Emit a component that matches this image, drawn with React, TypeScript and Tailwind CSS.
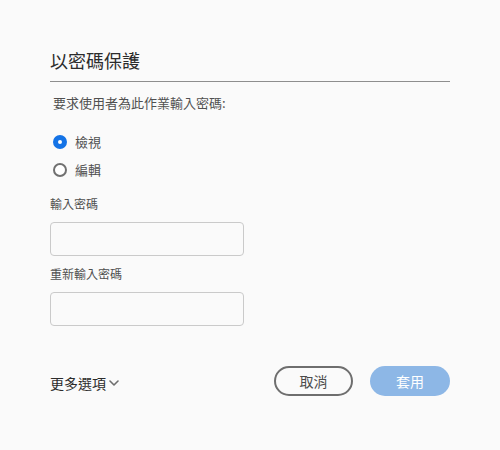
import React from 'react';

const font = { fontFamily: '"Noto Sans CJK TC", "Noto Sans", sans-serif' };

const Radio: React.FC<{ checked?: boolean; label: string }> = ({ checked, label }) => (
  <div className="flex items-center h-[28px]">
    <span
      className={
        checked
          ? 'w-[14px] h-[14px] rounded-full border-[5px] border-[#1473e6] bg-white ml-[3px]'
          : 'w-[14px] h-[14px] rounded-full border-2 border-[#707070] bg-white ml-[3px]'
      }
    />
    <span className="ml-[8px] text-[13px] leading-[20px] text-[#505050]">{label}</span>
  </div>
);

export default function App() {
  return (
    <div className="w-[500px] h-[450px] bg-[#fafafa] px-[50px] pt-[48px]" style={font}>
      {/* Header */}
      <h2 className="text-[18px] leading-[24px] font-normal text-[#2c2c2c] pb-[9px] border-b border-[#8e8e8e]">
        以密碼保護
      </h2>

      <p className="mt-[11px] ml-[3px] text-[13px] leading-[20px] text-[#505050]">
        要求使用者為此作業輸入密碼:
      </p>

      {/* Options */}
      <div className="mt-[15px]">
        <Radio checked label="檢視" />
        <Radio label="編輯" />
      </div>

      {/* Password fields */}
      <div className="mt-[12px]">
        <label className="block text-[12px] leading-[16px] text-[#505050]">輸入密碼</label>
        <input
          type="password"
          className="mt-[10px] block w-[194px] h-[34px] rounded-[4px] border border-[#cacaca] bg-[#fafafa] outline-none"
        />
      </div>
      <div className="mt-[10px]">
        <label className="block text-[12px] leading-[16px] text-[#505050]">重新輸入密碼</label>
        <input
          type="password"
          className="mt-[10px] block w-[194px] h-[34px] rounded-[4px] border border-[#cacaca] bg-[#fafafa] outline-none"
        />
      </div>

      {/* Footer */}
      <div className="mt-[40px] flex items-center justify-between">
        <button className="flex items-center gap-[3px] text-[14px] leading-[20px] text-[#2c2c2c] mt-[3px]">
          更多選項
          <svg width="10" height="10" viewBox="0 0 10 10" fill="none">
            <path d="M1 3l4 4 4-4" stroke="#6e6e6e" strokeWidth="1.6" strokeLinecap="round" strokeLinejoin="round" />
          </svg>
        </button>
        <div className="flex items-center gap-[17px]">
          <button className="w-[79px] h-[30px] rounded-full border-2 border-[#6e6e6e] text-[14px] text-[#4b4b4b] bg-transparent">
            取消
          </button>
          <button className="w-[80px] h-[30px] rounded-full bg-[#8db7e6] text-[14px] text-white">
            套用
          </button>
        </div>
      </div>
    </div>
  );
}
